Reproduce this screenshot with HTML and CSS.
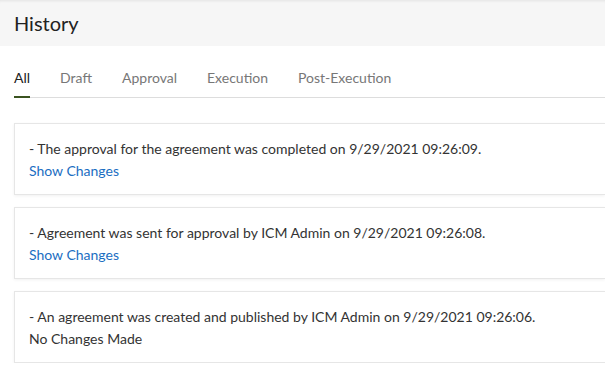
FILE: index.html
```html
<!DOCTYPE html>
<html lang="en">
    <head>
        <meta charset="UTF-8">
        <meta name="viewport" content="width=device-width, initial-scale=1.0">
        <title>History</title>
        <link rel="stylesheet" href="styles.css">
    </head>
    <body>
        <div class="page-header">
            <h1>History</h1>
        </div>

        <div class="content">
            <ul class="tabs">
                <li class="tab active">All</li>
                <li class="tab">Draft</li>
                <li class="tab">Approval</li>
                <li class="tab">Execution</li>
                <li class="tab">Post-Execution</li>
            </ul>

            <div class="history-list">
                <div class="history-card">
                    <p>- The approval for the agreement was completed on 9/29/2021 09:26:09.</p>
                    <a href="#" class="changes-link">Show Changes</a>
                </div>

                <div class="history-card">
                    <p>- Agreement was sent for approval by ICM Admin on 9/29/2021 09:26:08.</p>
                    <a href="#" class="changes-link">Show Changes</a>
                </div>

                <div class="history-card">
                    <p>- An agreement was created and published by ICM Admin on 9/29/2021 09:26:06.</p>
                    <span class="no-changes">No Changes Made</span>
                </div>
            </div>
        </div>
    </body>
</html>
```

FILE: styles.css
```css
body {
    font-family: Lato, "Liberation Sans", sans-serif;
    margin: 0;
    background-color: white;
    color: #333;
}

.page-header {
    background-color: #f6f6f6;
    box-shadow: inset 0 3px 3px -2px rgba(0,0,0,0.08);
    height: 46px;
    padding: 0 14px;
    display: flex;
    align-items: center;
}

.page-header h1 {
    margin: 0;
    font-size: 20px;
    font-weight: normal;
    color: #222;
}

.content {
    padding: 0 0 0 14px;
}

.tabs {
    list-style: none;
    margin: 15px 0 0 0;
    padding: 0;
    display: flex;
    gap: 30px;
    border-bottom: 1px solid #ddd;
}

.tab {
    font-size: 14px;
    color: #777;
    padding: 8px 0 10px;
    border-bottom: 2px solid transparent;
    margin-bottom: -1px;
}

.tab.active {
    color: #222;
    border-bottom-color: #3b5320;
}

.history-list {
    margin-top: 25px;
    display: flex;
    flex-direction: column;
    gap: 12px;
}

.history-card {
    border: 1px solid #e6e6e6;
    border-right: none;
    box-shadow: 0 1px 3px rgba(0,0,0,0.06);
    padding: 14px 14px 14px;
    font-size: 14px;
    line-height: 22px;
    height: 72px;
    box-sizing: border-box;
}

.history-card p {
    margin: 0;
}

.changes-link {
    color: #1b6ec2;
    text-decoration: none;
}

.no-changes {
    color: #333;
}
```
